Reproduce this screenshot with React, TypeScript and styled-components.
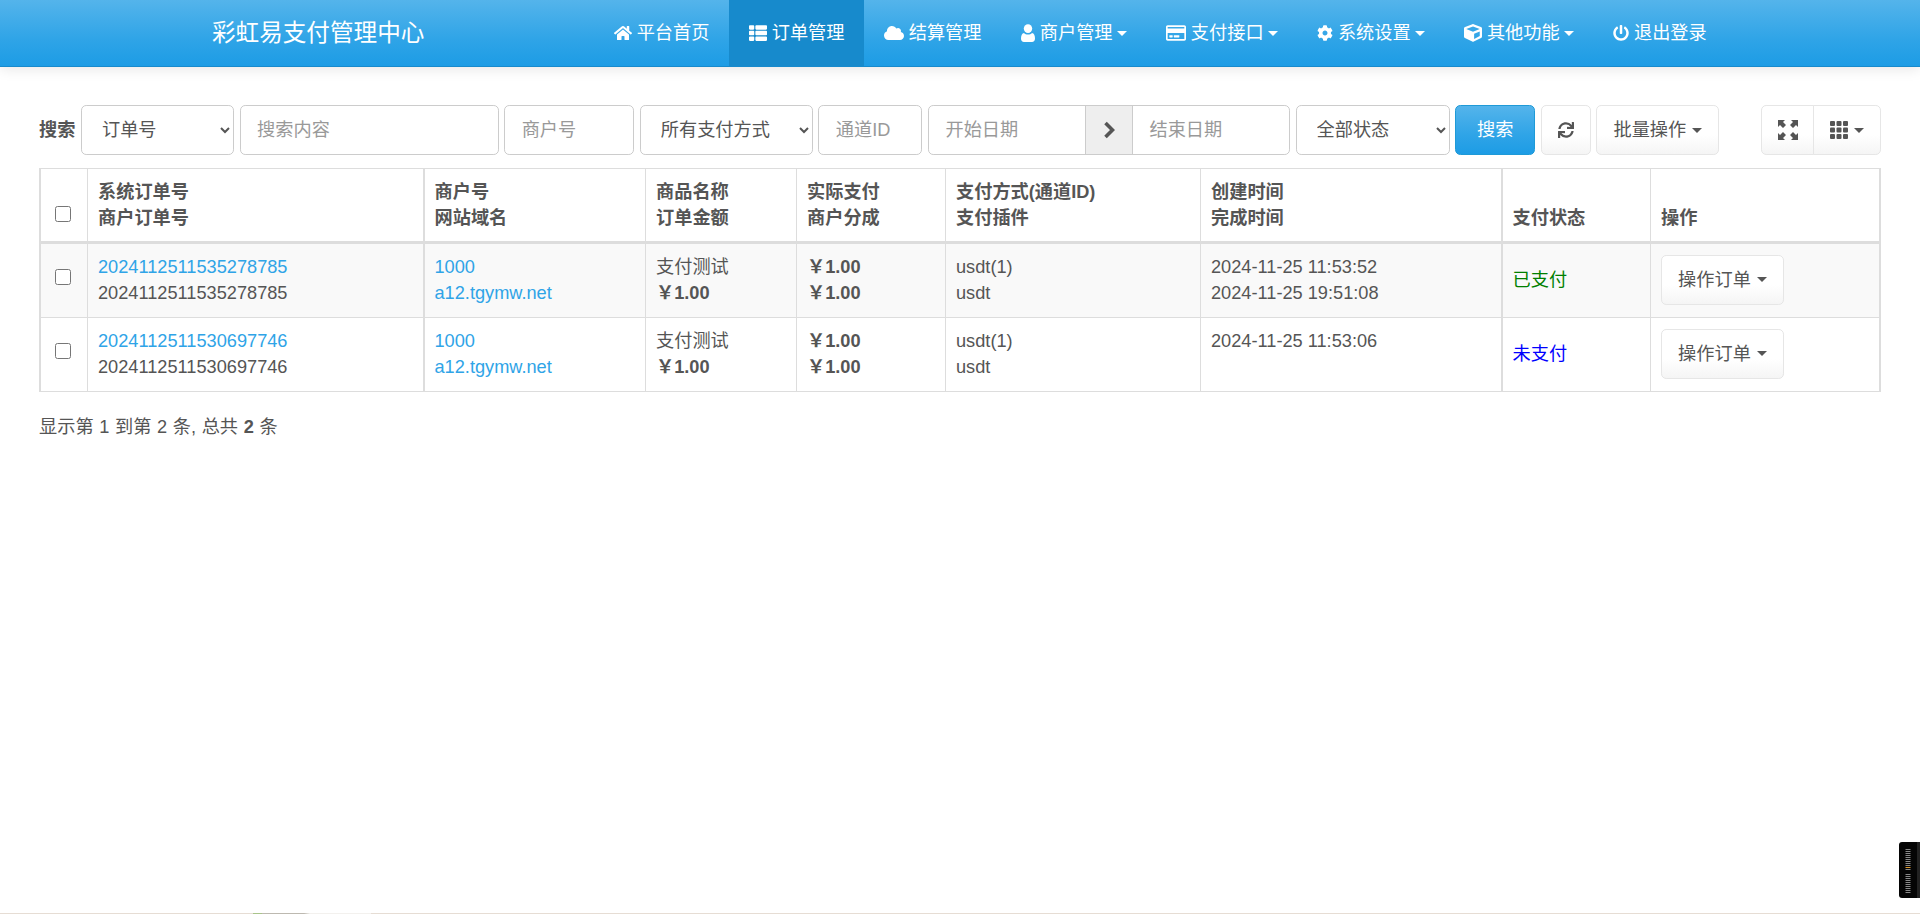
import React from "react";
import styled, { createGlobalStyle } from "styled-components";
import { FaHome, FaThList, FaCloud, FaRegCreditCard, FaCog, FaCube, FaPowerOff, FaSync } from "react-icons/fa";

const GlobalStyle = createGlobalStyle`
  html, body {
    margin: 0;
    padding: 0;
    background: #fff;
  }
  body {
    font-family: "Liberation Sans", "Noto Sans CJK SC", sans-serif;
    font-size: 18.2px;
    line-height: 26px;
    color: #555;
    min-height: 914px;
  }
  * { box-sizing: border-box; }
`;

const Navbar = styled.nav`
  display: flex;
  align-items: stretch;
  height: 67px;
  padding-left: 212px;
  background-image: linear-gradient(#54b4eb, #2fa4e7 60%, #1d9ce5);
  border-bottom: 1px solid #178acc;
  box-shadow: 0 2px 13px rgba(0, 0, 0, 0.1);
`;

const Brand = styled.div`
  width: 382px;
  font-size: 23.6px;
  line-height: 66px;
  color: #fff;
`;

const NavItem = styled.a<{ $active?: boolean }>`
  display: flex;
  align-items: center;
  height: 66px;
  padding: 0 19.65px;
  gap: 5px;
  color: #fff;
  background: ${(p) => (p.$active ? "#178acc" : "transparent")};
  white-space: nowrap;
  svg { flex: none; }
`;

const NavCaret = styled.span`
  display: inline-block;
  width: 0;
  height: 0;
  margin-left: -1px;
  border-top: 5px solid #fff;
  border-left: 5px solid transparent;
  border-right: 5px solid transparent;
`;

const Page = styled.main`
  padding: 38px 39px 0;
`;

const Toolbar = styled.form`
  display: flex;
  align-items: center;
  gap: 5.6px;
  height: 50px;
  margin-bottom: 13px;
`;

const SearchLabel = styled.label`
  font-weight: 700;
`;

const TextInput = styled.input<{ $width: number }>`
  width: ${(p) => p.$width}px;
  height: 50px;
  padding: 0 16.5px;
  font: inherit;
  color: #555;
  background: #fff;
  border: 1.3px solid #ccc;
  border-radius: 5.2px;
  outline: none;
  &::placeholder { color: #999; opacity: 1; }
`;

const Select = styled.select<{ $width: number }>`
  width: ${(p) => p.$width}px;
  height: 50px;
  padding: 0 16px;
  font: inherit;
  color: #555;
  background: #fff;
  border: 1.3px solid #ccc;
  border-radius: 5.2px;
  outline: none;
`;

const DateGroup = styled.div`
  display: flex;
  width: 362px;
  height: 50px;
`;

const DateInput = styled(TextInput)<{ $side: "left" | "right" }>`
  border-radius: ${(p) => (p.$side === "left" ? "5.2px 0 0 5.2px" : "0 5.2px 5.2px 0")};
`;

const DateAddon = styled.span`
  display: flex;
  align-items: center;
  justify-content: center;
  width: 48px;
  margin: 0 -1px;
  background: #eee;
  border: 1.3px solid #ccc;
  position: relative;
  z-index: 1;
`;

const Button = styled.button<{ $primary?: boolean; $width: number }>`
  display: inline-flex;
  align-items: center;
  justify-content: center;
  gap: 6px;
  flex: none;
  width: ${(p) => p.$width}px;
  height: 50px;
  padding: 0;
  font: inherit;
  color: ${(p) => (p.$primary ? "#fff" : "#555")};
  background-image: ${(p) =>
    p.$primary
      ? "linear-gradient(#54b4eb, #2fa4e7 60%, #1d9ce5)"
      : "linear-gradient(#fff, #fff 60%, #f5f5f5)"};
  border: 1.3px solid ${(p) => (p.$primary ? "#1f9ad7" : "#e6e6e6")};
  border-radius: 5.2px;
`;

const Caret = styled.span`
  display: inline-block;
  width: 0;
  height: 0;
  border-top: 5.2px solid #555;
  border-left: 5.2px solid transparent;
  border-right: 5.2px solid transparent;
`;

const ButtonGroup = styled.div`
  display: flex;
  margin-left: auto;
  ${Button}:first-child { border-radius: 5.2px 0 0 5.2px; }
  ${Button}:last-child { border-radius: 0 5.2px 5.2px 0; margin-left: -1px; }
`;

const Table = styled.table`
  width: 1840px;
  table-layout: fixed;
  border-collapse: collapse;
  border: 2px solid #ddd;
  border-top-width: 1px;
  border-bottom-width: 1px;
`;

const Column = styled.col<{ $width: number }>`
  width: ${(p) => p.$width}px;
`;

const Th = styled.th<{ $thick?: boolean }>`
  padding: 10px 10.5px;
  padding-left: ${(p) => (p.$thick ? 9.5 : 10.5)}px;
  height: 74px;
  text-align: left;
  vertical-align: bottom;
  font-weight: 700;
  border: 1px solid #ddd;
  border-left-width: ${(p) => (p.$thick ? 2 : 1)}px;
  border-bottom: 3px solid #ddd;
`;

const Row = styled.tr<{ $striped?: boolean }>`
  background: ${(p) => (p.$striped ? "#f9f9f9" : "#fff")};
`;

const Td = styled.td<{ $thick?: boolean; $middle?: boolean; $height: number }>`
  height: ${(p) => p.$height}px;
  padding: ${(p) => (p.$middle ? "9px 10.5px 11px" : "10px 10.5px")};
  padding-left: ${(p) => (p.$thick ? 9.5 : 10.5)}px;
  vertical-align: ${(p) => (p.$middle ? "middle" : "top")};
  border: 1px solid #ddd;
  border-left-width: ${(p) => (p.$thick ? 2 : 1)}px;
  white-space: nowrap;
`;

const CheckCell = styled(Td)`
  padding: 25px 12px 0 10px;
  text-align: center;
  line-height: 0;
  vertical-align: top;
`;

const CheckHead = styled(Th)`
  padding: 0 12px 19px 10px;
  text-align: center;
  line-height: 0;
`;

const Check = styled.input.attrs({ type: "checkbox" })`
  width: 16px;
  height: 16px;
  margin: 0;
  vertical-align: middle;
`;

const Line = styled.div``;

const Link = styled.a`
  display: block;
  color: #2fa4e7;
`;

const Status = styled.span<{ $color: string }>`
  color: ${(p) => p.$color};
`;

const Summary = styled.div`
  margin-top: 22px;
  word-spacing: 0.6px;
`;

const PagerWidget = styled.div`
  position: fixed;
  right: 0;
  top: 842px;
  width: 21px;
  height: 56px;
  background: #050505;
  border-radius: 3px 0 0 3px;
  border-right: 3px solid #222;
  svg { display: block; }
`;

const BottomEdge = styled.div`
  position: fixed;
  left: 0;
  right: 0;
  bottom: 0;
  height: 1px;
  background: linear-gradient(
    to right,
    #e6ddd4 0,
    #e6ddd4 253px,
    #a9c48a 253px,
    #a9c48a 262px,
    #bdb9b0 262px,
    #bdb9b0 304px,
    #f3f1ee 310px,
    #f3f1ee 371px,
    #e6ddd4 371px
  );
`;

const UserIcon = () => (
  <svg width="14" height="18" viewBox="0 0 14 18" fill="#fff">
    <ellipse cx="7" cy="4.6" rx="4.2" ry="4.4" />
    <path d="M3 9c1 1 2.4 1.500 4 1.500S10 10 11 9c2 .4 3 2.500 3 5.500 0 2-1.200 3.500-3 3.500H3c-1.800 0-3-1.500-3-3.500C0 11.500 1 9.400 3 9z" />
  </svg>
);

const FullscreenIcon = () => (
  <svg width="20" height="20" viewBox="0 0 20 20" fill="#555">
    <path d="M0 0h7L5 2l3 3-3 3-3-3-2 2zM20 0v7l-2-2-3 3-3-3 3-3-2-2zM0 20v-7l2 2 3-3 3 3-3 3 2 2zM20 20h-7l2-2-3-3 3-3 3 3 2-2z" />
  </svg>
);

const GridIcon = () => (
  <svg width="18" height="18" viewBox="0 0 18 18" fill="#555">
    {[0, 6.5, 13].map((x) =>
      [0, 6.500, 13].map((y) => <rect key={`${x}-${y}`} x={x} y={y} width="5" height="5" rx="1" />)
    )}
  </svg>
);

const ChevronIcon = () => (
  <svg width="12" height="18" viewBox="0 0 12 18" fill="none" stroke="#555" strokeWidth="3.6">
    <path d="M2.500 2l7 7-7 7" />
  </svg>
);

const TickMarks = () => (
  <svg width="18" height="56" viewBox="0 0 18 56">
    {Array.from({ length: 21 }).map((_, i) => (
      <rect
        key={i}
        x="6.500"
        y={7 + i * 2 + (i > 10 ? 3 : 0)}
        width="5"
        height="1"
        fill={i === 9 ? "#e09a2a" : "#8a8a8a"}
      />
    ))}
  </svg>
);

const navItems = [
  { icon: <FaHome size={18} />, label: "平台首页" },
  { icon: <FaThList size={18} />, label: "订单管理", active: true },
  { icon: <FaCloud size={20} />, label: "结算管理" },
  { icon: <UserIcon />, label: "商户管理", caret: true },
  { icon: <FaRegCreditCard size={20} />, label: "支付接口", caret: true },
  { icon: <FaCog size={16} />, label: "系统设置", caret: true },
  { icon: <FaCube size={18} />, label: "其他功能", caret: true },
  { icon: <FaPowerOff size={16} />, label: "退出登录" },
];

const orders = [
  { no: "2024112511535278785", created: "2024-11-25 11:53:52", finished: "2024-11-25 19:51:08", status: "已支付", color: "green", height: 75 },
  { no: "2024112511530697746", created: "2024-11-25 11:53:06", finished: "", status: "未支付", color: "blue", height: 74 },
];

export default function App() {
  return (
    <>
      <GlobalStyle />
      <Navbar>
        <Brand>彩虹易支付管理中心</Brand>
        {navItems.map((item) => (
          <NavItem key={item.label} $active={item.active}>
            {item.icon}
            {item.label}
            {item.caret && <NavCaret />}
          </NavItem>
        ))}
      </Navbar>
      <Page>
        <Toolbar>
          <SearchLabel>搜索</SearchLabel>
          <Select $width={153} defaultValue="订单号">
            <option>订单号</option>
          </Select>
          <TextInput $width={259} placeholder="搜索内容" />
          <TextInput $width={130} placeholder="商户号" />
          <Select $width={173} defaultValue="所有支付方式">
            <option>所有支付方式</option>
          </Select>
          <TextInput $width={104} placeholder="通道ID" />
          <DateGroup>
            <DateInput $side="left" $width={158} placeholder="开始日期" />
            <DateAddon>
              <ChevronIcon />
            </DateAddon>
            <DateInput $side="right" $width={158} placeholder="结束日期" />
          </DateGroup>
          <Select $width={154} defaultValue="全部状态">
            <option>全部状态</option>
          </Select>
          <Button $primary $width={80}>搜索</Button>
          <Button $width={50}><FaSync size={16} /></Button>
          <Button $width={123}>批量操作<Caret /></Button>
          <ButtonGroup>
            <Button $width={53}><FullscreenIcon /></Button>
            <Button $width={68}><GridIcon /><Caret /></Button>
          </ButtonGroup>
        </Toolbar>
        <Table>
          <colgroup>
            <Column $width={47} />
            <Column $width={337} />
            <Column $width={221} />
            <Column $width={151} />
            <Column $width={149} />
            <Column $width={255} />
            <Column $width={302} />
            <Column $width={148} />
            <Column $width={230} />
          </colgroup>
          <thead>
            <tr>
              <CheckHead><Check /></CheckHead>
              <Th><Line>系统订单号</Line><Line>商户订单号</Line></Th>
              <Th $thick><Line>商户号</Line><Line>网站域名</Line></Th>
              <Th><Line>商品名称</Line><Line>订单金额</Line></Th>
              <Th><Line>实际支付</Line><Line>商户分成</Line></Th>
              <Th><Line>支付方式(通道ID)</Line><Line>支付插件</Line></Th>
              <Th><Line>创建时间</Line><Line>完成时间</Line></Th>
              <Th $thick>支付状态</Th>
              <Th>操作</Th>
            </tr>
          </thead>
          <tbody>
            {orders.map((order, i) => (
              <Row key={order.no} $striped={i === 0}>
                <CheckCell $height={order.height}><Check /></CheckCell>
                <Td $height={order.height}>
                  <Link>{order.no}</Link>
                  <Line>{order.no}</Line>
                </Td>
                <Td $height={order.height} $thick>
                  <Link>1000</Link>
                  <Link>a12.tgymw.net</Link>
                </Td>
                <Td $height={order.height}>
                  <Line>支付测试</Line>
                  <Line><b>￥1.00</b></Line>
                </Td>
                <Td $height={order.height}>
                  <Line><b>￥1.00</b></Line>
                  <Line><b>￥1.00</b></Line>
                </Td>
                <Td $height={order.height}>
                  <Line>usdt(1)</Line>
                  <Line>usdt</Line>
                </Td>
                <Td $height={order.height}>
                  <Line>{order.created}</Line>
                  <Line>{order.finished}</Line>
                </Td>
                <Td $height={order.height} $thick $middle>
                  <Status $color={order.color}>{order.status}</Status>
                </Td>
                <Td $height={order.height} $middle>
                  <Button $width={123}>操作订单<Caret /></Button>
                </Td>
              </Row>
            ))}
          </tbody>
        </Table>
        <Summary>显示第 1 到第 2 条, 总共 <b>2</b> 条</Summary>
      </Page>
      <PagerWidget><TickMarks /></PagerWidget>
      <BottomEdge />
    </>
  );
}
